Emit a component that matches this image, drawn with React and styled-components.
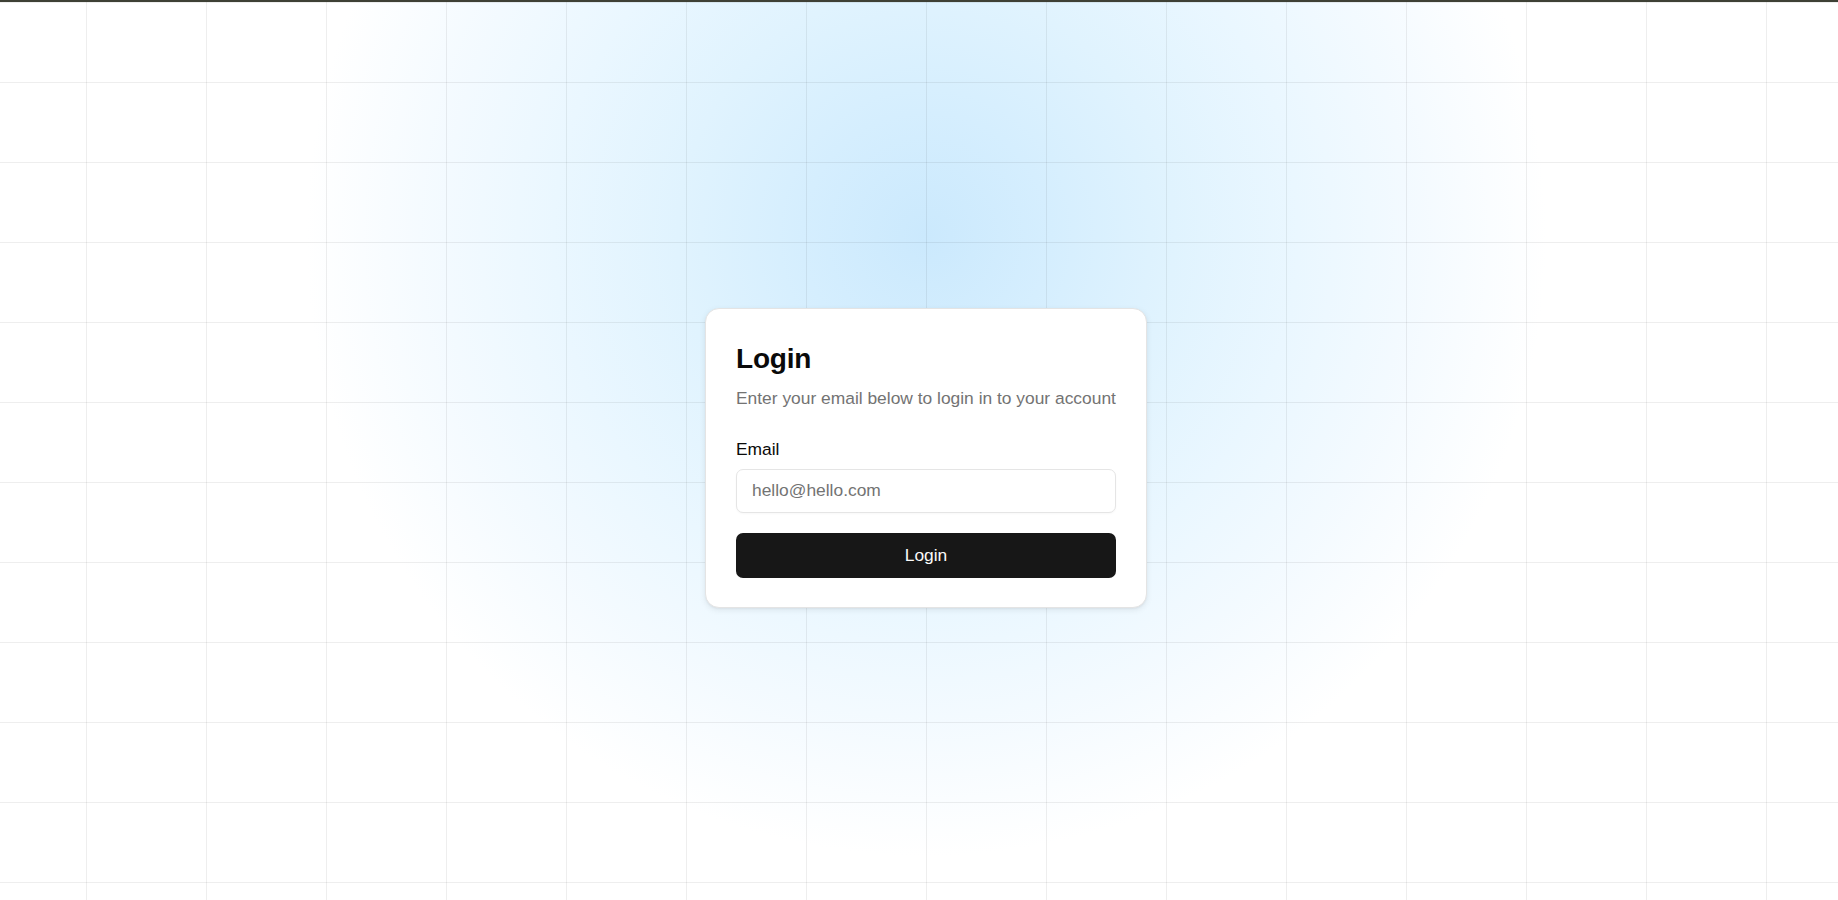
import React from "react";
import styled, { createGlobalStyle } from "styled-components";

const GlobalStyle = createGlobalStyle`
  html, body {
    margin: 0;
    padding: 0;
    height: 100%;
    overflow: hidden;
  }
  body {
    font-family: "Liberation Sans", Arial, sans-serif;
    background: #ffffff;
    color: #0a0a0a;
  }
  * { box-sizing: border-box; }
`;

const TopBar = styled.div`
  height: 2px;
  background: #3e4035;
`;

const Page = styled.main`
  min-height: calc(100vh - 2px);
  display: flex;
  align-items: center;
  justify-content: center;
  padding: 13px 0 0 14px;
  background-color: #ffffff;
  background-image:
    linear-gradient(to right, rgba(0, 0, 0, 0.068) 1px, transparent 1px),
    linear-gradient(to bottom, rgba(0, 0, 0, 0.068) 1px, transparent 1px),
    radial-gradient(
      circle 620px at 926px 234px,
      #cbe9fd 0%,
      #d5eefe 20%,
      #e0f3fe 40%,
      #eaf7ff 60%,
      rgba(243, 250, 255, 0.9) 80%,
      rgba(255, 255, 255, 0) 100%
    );
  background-size: 120px 80px, 120px 80px, 100% 100%;
  background-position: 86px 80px, 86px 80px, 0 0;
  background-repeat: repeat, repeat, no-repeat;
`;

const Card = styled.section`
  width: 442px;
  background: #ffffff;
  border: 1px solid #e4e4e4;
  border-radius: 14px;
  box-shadow: 0 2px 6px rgba(0, 0, 0, 0.08), 0 1px 2px rgba(0, 0, 0, 0.04);
  padding: 30px 30px 29px;
  display: flex;
  flex-direction: column;
`;

const Title = styled.h1`
  margin: 0;
  font-size: 28px;
  line-height: 40px;
  font-weight: 700;
  color: #0a0a0a;
  letter-spacing: -0.2px;
`;

const Subtitle = styled.p`
  margin: 7px 0 0;
  font-size: 17.4px;
  line-height: 24px;
  color: #737373;
  white-space: nowrap;
`;

const Field = styled.div`
  margin-top: 27px;
  display: flex;
  flex-direction: column;
  gap: 8px;
`;

const Label = styled.label`
  font-size: 17.4px;
  line-height: 24px;
  font-weight: 500;
  color: #0a0a0a;
`;

const Input = styled.input`
  height: 44px;
  width: 100%;
  border: 1px solid #e5e5e5;
  border-radius: 7px;
  padding: 0 15px;
  font-family: "Liberation Sans", Arial, sans-serif;
  font-size: 17.4px;
  color: #0a0a0a;
  background: #ffffff;
  outline: none;
  box-shadow: 0 1px 2px rgba(0, 0, 0, 0.03);
  &::placeholder {
    color: #737373;
  }
`;

const Button = styled.button`
  margin-top: 20px;
  height: 45px;
  width: 100%;
  border: none;
  border-radius: 7px;
  background: #171717;
  color: #fafafa;
  font-family: "Liberation Sans", Arial, sans-serif;
  font-size: 17.4px;
  font-weight: 500;
  cursor: pointer;
`;

export default function App() {
  return (
    <>
      <GlobalStyle />
      <TopBar />
      <Page>
        <Card>
          <Title>Login</Title>
          <Subtitle>Enter your email below to login in to your account</Subtitle>
          <Field>
            <Label htmlFor="email">Email</Label>
            <Input id="email" type="email" placeholder="hello@hello.com" />
          </Field>
          <Button type="button">Login</Button>
        </Card>
      </Page>
    </>
  );
}
